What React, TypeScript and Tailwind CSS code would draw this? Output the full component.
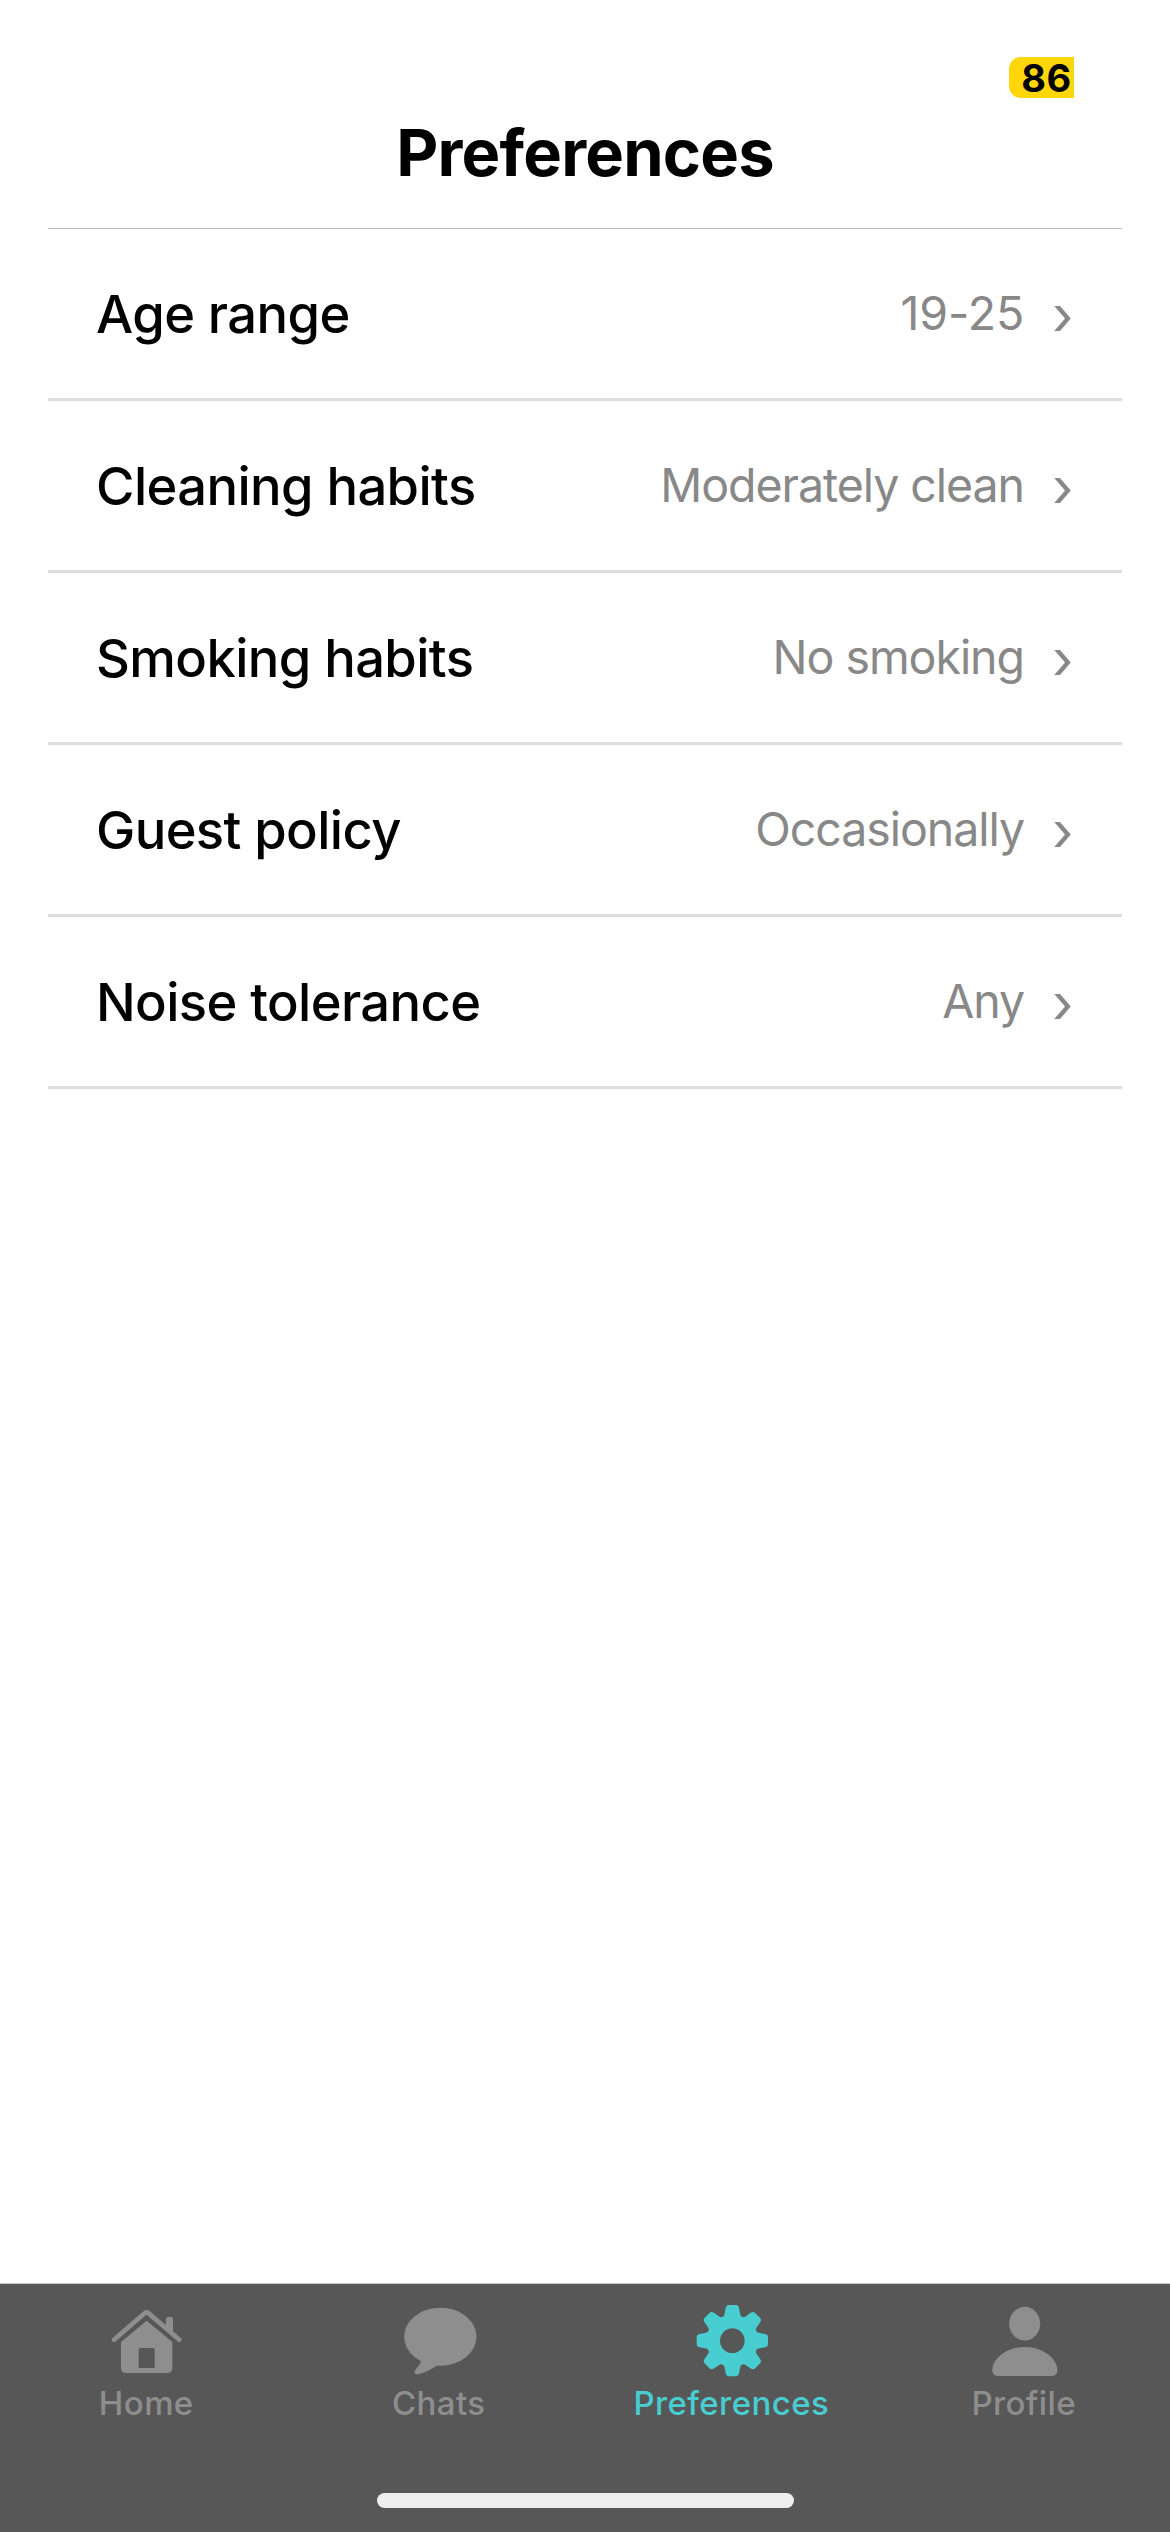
import type { ReactNode } from "react";

interface Preference {
  label: string;
  value: string;
}

interface Tab {
  key: string;
  label: string;
  icon: ReactNode;
}

const preferences: Preference[] = [
  { label: "Age range", value: "19-25" },
  { label: "Cleaning habits", value: "Moderately clean" },
  { label: "Smoking habits", value: "No smoking" },
  { label: "Guest policy", value: "Occasionally" },
  { label: "Noise tolerance", value: "Any" },
];

const teeth = [0, 45, 90, 135, 180, 225, 270, 315];

function HomeIcon() {
  return (
    <svg viewBox="0 0 240 240" className="size-20" fill="currentColor">
      <path d="M24 119 L116 40 Q122 35 128 40 L220 119" fill="none" stroke="currentColor" strokeWidth="14" strokeLinecap="round" />
      <path d="M180 86 V57 Q180 51 186 51 H195 Q201 51 201 57 V104 Z" />
      <path fillRule="evenodd" d="M122 62 L199 126 V203 Q199 219 183 219 H61 Q45 219 45 203 V126 Z M103 144 Q98 144 98 149 V204 H146 V149 Q146 144 141 144 Z" />
    </svg>
  );
}

function ChatIcon() {
  return (
    <svg viewBox="0 0 240 240" className="size-20" fill="currentColor">
      <ellipse cx="124" cy="110" rx="108.5" ry="87" />
      <path d="M68 178 Q67 190 50 208 Q45 214 47 219 Q50 224 60 222 Q84 216 113 197 L120 180 Z" />
    </svg>
  );
}

function GearIcon() {
  return (
    <svg viewBox="0 0 240 240" className="size-20" fill="currentColor">
      <g transform="translate(124 122)">
        <path fillRule="evenodd" d="M-78 0 A78 78 0 1 1 78 0 A78 78 0 1 1 -78 0 Z M-37 0 A37 37 0 1 0 37 0 A37 37 0 1 0 -37 0 Z" />
        {teeth.map((deg) => (
          <path key={deg} transform={`rotate(${deg})`} d="M-28 -70 Q-24 -74 -23 -82 L-20 -98 Q-18 -107 -11 -107 H11 Q18 -107 20 -98 L23 -82 Q24 -74 28 -70 Z" />
        ))}
      </g>
    </svg>
  );
}

function ProfileIcon() {
  return (
    <svg viewBox="0 0 240 240" className="size-20" fill="currentColor">
      <ellipse cx="122" cy="71" rx="46.5" ry="50.5" />
      <path d="M25 210 C25 178 65 141 122.5 141 S220 178 220 210 Q220 228 201 228 H44 Q25 228 25 210 Z" />
    </svg>
  );
}

const tabs: Tab[] = [
  { key: "home", label: "Home", icon: <HomeIcon /> },
  { key: "chats", label: "Chats", icon: <ChatIcon /> },
  { key: "preferences", label: "Preferences", icon: <GearIcon /> },
  { key: "profile", label: "Profile", icon: <ProfileIcon /> },
];

function PreferenceRow({ label, value }: Preference) {
  // digits need looser spacing than words
  const isNumeric = /^\d/.test(value);

  return (
    <li className="flex h-[172px] items-center border-b-3 border-[#dddddd] px-12">
      <span className="mt-0.5 text-[52.5px] leading-none font-medium tracking-[-0.6px] text-black">{label}</span>
      <span className={`ml-auto text-[46.5px] leading-none text-[#888888] ${isNumeric ? "tracking-[-0.15px]" : "tracking-[-1.05px]"}`}>
        {value}
      </span>
      <svg viewBox="0 0 49 74" className="mt-2.5 mr-[3px] ml-[30px] h-[25px] w-[17px] fill-[#888888]">
        <path d="M0 0 H17 L49 37 L17 74 H0 L32 37 Z" />
      </svg>
    </li>
  );
}

export default function App() {
  const activeTab = "preferences";

  return (
    <div className="flex h-[2532px] w-[1170px] flex-col bg-white font-['Inter',sans-serif]">
      <header className="mx-12 flex h-[229px] flex-col border-b border-[#bcbcc2] pt-[57px]">
        <div className="mr-12 flex h-[41px] w-[65px] items-center justify-center self-end rounded-l-[12px] bg-[#ffd60a] pl-2.5">
          <span className="text-[38px] leading-none font-bold tracking-[0.5px] text-black">86</span>
        </div>
        <h1 className="mt-[22px] text-center text-[65px] leading-[66px] font-bold tracking-[-0.8px] text-black">Preferences</h1>
      </header>

      <ul className="mx-12 flex-1">
        {preferences.map((p) => (
          <PreferenceRow key={p.label} label={p.label} value={p.value} />
        ))}
      </ul>

      <nav className="flex h-[249px] flex-col border-t border-[#c8c8c8] bg-[#575757]">
        <div className="grid grid-cols-4 pt-4">
          {tabs.map((tab) => (
            <div key={tab.key}
              className={`flex flex-col items-center ${tab.key === activeTab ? "text-[#48cdd0]" : "text-[#8e8e8e]"}`}>
              {tab.icon}
              <span className="mt-[3px] text-[33px] leading-10 font-medium tracking-[0.4px]">{tab.label}</span>
            </div>
          ))}
        </div>
        <div className="mt-auto mb-6 h-[15px] w-[417px] self-center rounded-full bg-[#eeeeee]" />
      </nav>
    </div>
  );
}
